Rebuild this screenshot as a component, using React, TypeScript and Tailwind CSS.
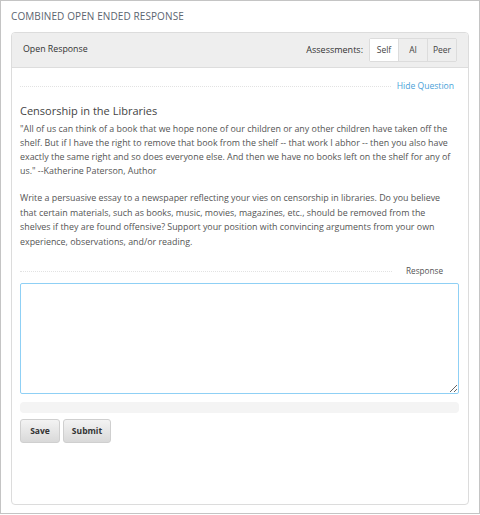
import React from "react";

export default function App() {
  return (
    <div className="w-[480px] h-[514px] border border-[#c4c4c4] px-[10px] pt-[8px] font-['Open_Sans',sans-serif] text-[#555] bg-white">
      <h2 className="text-[10px] leading-[14px] tracking-[0.01em] uppercase text-[#5b6570]">
        Combined Open Ended Response
      </h2>

      <div className="mt-[9px] h-[473px] border border-[#dcdcdc] rounded-[4px] overflow-hidden">
        <div className="h-[35px] bg-[#eeeeee] border-b border-[#dddddd] flex items-center justify-between pl-[11px] pr-[11px]">
          <span className="text-[8.8px] text-[#333]">Open Response</span>
          <div className="flex items-center">
            <span className="text-[9px] text-[#333] mr-[6px]">Assessments:</span>
            <div className="flex h-[24px] border border-[#dcdcdc] rounded-[2px] text-[8.5px] text-[#444]">
              <button className="w-[28px] bg-white">Self</button>
              <button className="w-[29px] bg-[#eeeeee] border-l border-[#dcdcdc]">AI</button>
              <button className="w-[29px] bg-[#eeeeee] border-l border-[#dcdcdc]">Peer</button>
            </div>
          </div>
        </div>

        <div className="pl-[8px] pr-[9px] pt-[11px]">
          <div className="flex items-center h-[15px]">
            <div className="flex-1 border-t border-dotted border-[#e2e2e2]" />
            <a className="ml-[6px] mr-[5px] text-[8.6px] leading-[15px] text-[#4a9fd8]">Hide Question</a>
          </div>

          <h3 className="mt-[9px] text-[11px] leading-[16px] text-[#444]">Censorship in the Libraries</h3>
          <p className="mt-[3px] text-[8.9px] leading-[14px] text-[#555]">
            "All of us can think of a book that we hope none of our children or any other children have taken off the
            shelf. But if I have the right to remove that book from the shelf -- that work I abhor -- then you also have
            exactly the same right and so does everyone else. And then we have no books left on the shelf for any of
            us." --Katherine Paterson, Author
          </p>
          <p className="mt-[13px] pr-[6px] text-[8.9px] leading-[14.5px] text-[#555]">
            Write a persuasive essay to a newspaper reflecting your vies on censorship in libraries. Do you believe
            that certain materials, such as books, music, movies, magazines, etc., should be removed from the
            shelves if they are found offensive? Support your position with convincing arguments from your own
            experience, observations, and/or reading.
          </p>

          <div className="mt-[15px] flex items-center h-[14px]">
            <div className="flex-1 border-t border-dotted border-[#e2e2e2]" />
            <span className="ml-[14px] mr-[16px] text-[8.2px] leading-[14px] text-[#555]">Response</span>
          </div>

          <textarea
            autoFocus
            className="mt-[5px] block w-full h-[111px] border border-[#8fd0f5] rounded-[2px] outline-none px-[4px] py-[3px] text-[11px] resize-y"
          />

          <div className="mt-[8px] h-[11px] bg-[#f4f4f4] rounded-[4px]" />

          <div className="mt-[6px] flex gap-[3px]">
            <button className="w-[40px] h-[24px] rounded-[3px] border border-[#cfcfcf] bg-gradient-to-b from-[#f3f3f3] to-[#d9d9d9] text-[8.5px] font-bold text-[#333]">
              Save
            </button>
            <button className="w-[48px] h-[24px] rounded-[3px] border border-[#cfcfcf] bg-gradient-to-b from-[#f3f3f3] to-[#d9d9d9] text-[8.5px] font-bold text-[#333]">
              Submit
            </button>
          </div>
        </div>
      </div>
    </div>
  );
}
